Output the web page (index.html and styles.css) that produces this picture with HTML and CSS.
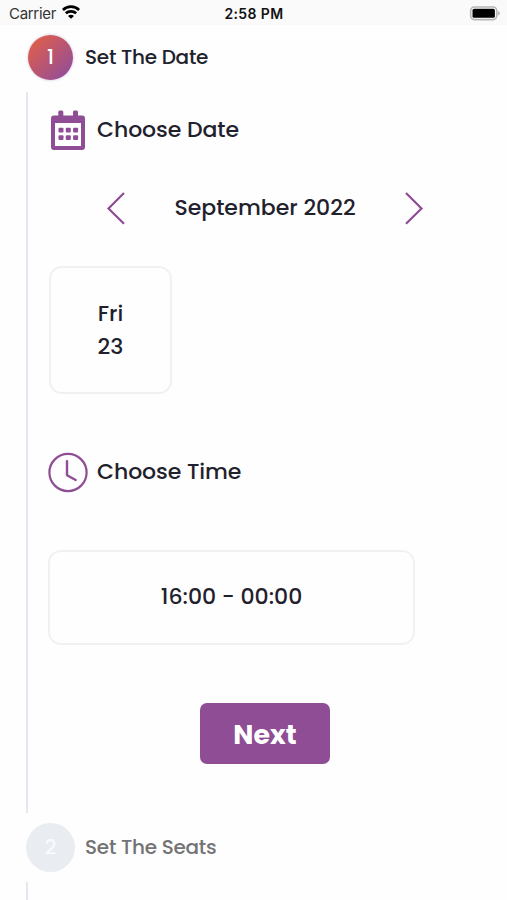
FILE: index.html
```html
<!DOCTYPE html>
<html lang="en">
<head>
<meta charset="utf-8">
<title>Set The Date</title>
<link rel="stylesheet" href="styles.css">
</head>
<body>
<header class="status">
  <div class="carrier"><span class="carrier-name">Carrier</span>
    <svg class="wifi" width="18" height="14" viewBox="0 0 18 14" fill="none" stroke="#000" stroke-width="2.7"><path d="M.9 4.900C5.400.6 12.600.6 17.100 4.900M3.800 8.300c2.900-2.700 7.500-2.700 10.400 0"/><path d="M9 13.800 6 10.900c1.700-1.500 4.300-1.500 6 0z" fill="#000" stroke="none"/></svg>
  </div>
  <div class="clock"><span>2:58 PM</span></div>
  <svg class="battery" width="31" height="15" viewBox="0 0 31 15"><rect x="1.700" y="1" width="26" height="12.600" rx="3.600" fill="#fff" stroke="#b5b5b5" stroke-width="1.600"/><rect x="3.500" y="2.800" width="22.400" height="9" rx="1.600"/><path d="M28.800 5c1.300.5 2 1.200 2 2.300s-.7 1.800-2 2.300z" fill="#b5b5b5"/></svg>
</header>
<main>
  <div class="step">
    <span class="badge active"><span>1</span></span>
    <h1 class="step-title"><span>Set The Date</span></h1>
  </div>
  <section class="panel">
    <div class="heading">
      <svg width="40" height="42" viewBox="0 0 40 42" fill="#8e4d94"><rect x="10.300" y="1.500" width="5" height="8" rx="1.500"/><rect x="25" y="1.500" width="5" height="8" rx="1.500"/><path fill-rule="evenodd" d="M6 6.500h28a3 3 0 0 1 3 3V38a3 3 0 0 1-3 3H6a3 3 0 0 1-3-3V9.500a3 3 0 0 1 3-3zM7 14v23h26V14z"/><rect x="10.500" y="18.800" width="5" height="4.800" rx="1"/><rect x="17.800" y="18.800" width="5" height="4.800" rx="1"/><rect x="25.100" y="18.800" width="5" height="4.800" rx="1"/><rect x="10.500" y="26.200" width="5" height="4.800" rx="1"/><rect x="17.800" y="26.200" width="5" height="4.800" rx="1"/><rect x="25.100" y="26.200" width="5" height="4.800" rx="1"/></svg>
      <h2><span>Choose Date</span></h2>
    </div>
    <div class="month">
      <svg width="20" height="34" viewBox="0 0 20 34"><path d="M18 2 2.500 17.500 18 32.800"/></svg>
      <span class="month-name">September 2022</span>
      <svg width="20" height="34" viewBox="0 0 20 34"><path d="M2 2 17.500 17.500 2 32.800"/></svg>
    </div>
    <div class="day"><span>Fri</span><span>23</span></div>
    <div class="heading">
      <svg width="40" height="42" viewBox="0 0 40 42" fill="none" stroke="#8e4d94"><circle cx="20" cy="21.500" r="18.600" stroke-width="2.200"/><path d="M19 10.300v14l8.700 4.700" stroke-width="2.400" stroke-linecap="round" stroke-linejoin="round"/></svg>
      <h2><span>Choose Time</span></h2>
    </div>
    <div class="slot"><span>16:00 - 00:00</span></div>
    <button class="next"><span>Next</span></button>
  </section>
  <div class="step second">
    <span class="badge"><span>2</span></span>
    <h1 class="step-title muted"><span>Set The Seats</span></h1>
  </div>
  <section class="panel rest"></section>
</main>
</body>
</html>
```
FILE: styles.css
```css
* { box-sizing: border-box; }
body {
  margin: 0;
  height: 900px;
  overflow: hidden;
  background: #fefefe;
  color: #1f222c;
  font-family: Poppins, Inter, "Open Sans", sans-serif;
  font-weight: 500;
}
h1, h2 { margin: 0; font-weight: 500; }
svg { display: block; flex: none; }
.status {
  display: grid;
  grid-template-columns: 1fr auto 1fr;
  align-items: center;
  height: 25px;
  padding: 2px 7px 0 9px;
  background: #fafafa;
  color: #111;
  font: 400 15px/20px Inter, sans-serif;
}
.carrier { display: flex; align-items: center; gap: 6px; color: #333; }
.carrier-name { letter-spacing: -.3px; }
.wifi { margin-top: -3px; }
.clock { margin-left: -1px; font-size: 14px; font-weight: 600; letter-spacing: .4px; }
.battery { justify-self: end; margin-top: -1px; }
.step { display: flex; align-items: center; height: 64px; padding-left: 26px; gap: 10px; }
.badge {
  display: grid;
  place-items: center;
  width: 49px;
  height: 49px;
  flex: none;
  border-radius: 50%;
  background: #e9edf2;
  color: #f8fafc;
  font-size: 20px;
}
.badge.active {
  width: 45px;
  height: 45px;
  margin: 0 2px;
  background: linear-gradient(135deg, #e45f46 5%, #8e4d9c 95%);
  box-shadow: 0 0 3px #c9b9dc;
  color: #fff;
}
.step-title { font-size: 20px; line-height: 30px; letter-spacing: -.27px; }
.muted { color: #737375; }
.panel {
  display: flex;
  flex-direction: column;
  align-items: flex-start;
  height: 721px;
  margin: 3px 0 0 26px;
  padding: 17px 0 0 20px;
  border-left: 2px solid #e6e6f0;
}
.heading { display: flex; align-items: center; gap: 9px; height: 42px; }
h2 { font-size: 22px; line-height: 34px; letter-spacing: -.07px; }
.month {
  display: flex;
  align-items: center;
  justify-content: space-between;
  width: 318px;
  height: 34px;
  margin: 40px 0 0 58px;
}
.month path { fill: none; stroke: #8e4d94; stroke-width: 2.2; }
.month-name { font-size: 22px; line-height: 32px; margin-top: -1px; }
.day {
  display: flex;
  flex-direction: column;
  align-items: center;
  justify-content: center;
  width: 123px;
  height: 128px;
  margin: 41px 0 57px 1px;
  border: 2px solid #eff1f3;
  border-radius: 13px;
  font-size: 22px;
  line-height: 33px;
}
.slot {
  display: grid;
  place-items: center;
  width: 367px;
  height: 95px;
  margin-top: 57px;
  padding-bottom: 2px;
  border: 2px solid #eff1f3;
  border-radius: 13px;
  font-size: 22px;
}
.next {
  width: 130px;
  height: 61px;
  margin: 58px 0 0 152px;
  padding: 2px 0 0;
  border: 0;
  border-radius: 7px;
  background: #8e4d94;
  color: #fff;
  font: 700 26.8px/40px Poppins, Inter, sans-serif;
}
.second { height: 68px; }
.rest { height: 30px; margin-top: 1px; }
```
